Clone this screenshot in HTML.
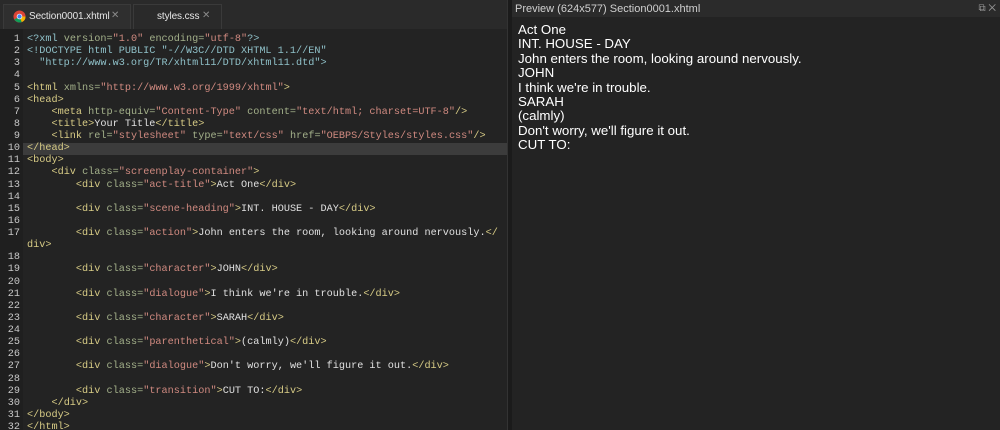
<!DOCTYPE html>
<html><head><meta charset="utf-8"><style>
*{margin:0;padding:0;box-sizing:border-box}
html,body{width:1000px;height:430px;overflow:hidden}
body{background:#232323;position:relative;font-family:"Liberation Sans",sans-serif}
.tabs{position:absolute;left:0;top:0;width:507px;height:29px;background:#2a2a2a}
.tab{position:absolute;top:4px;height:25px;background:#2f2f2f;border:1px solid #3a3a3a;border-bottom:none;color:#e6e6e6;font-size:10px;line-height:24px;white-space:nowrap;letter-spacing:-0.1px}
.x{position:absolute;color:#8a8a8a;font-size:10px;top:10px;line-height:12px;z-index:5}
.gut{position:absolute;left:0;top:29px;width:23px;height:401px;background:#1f1f1f}
.code{position:absolute;left:0;top:34px;width:507px;font-family:"Liberation Mono",monospace;font-size:10.2px;line-height:12.13px;color:#e0e0e0}
.r{position:relative;height:12.13px}
.n{position:absolute;left:0;width:20px;text-align:right;color:#c8c8c8}
.t{position:absolute;left:27px;white-space:pre}
.hl{background:#3c3c3c;left:23px;right:0;position:absolute;top:0;bottom:0}
.g{color:#d8cc86}.a{color:#a3b08a}.v{color:#d08a80}.d{color:#8fc0c8}
.split{position:absolute;left:507px;top:0;width:5px;height:430px;background:#1b1b1b;border-left:1px solid #333}
.ph{position:absolute;left:512px;top:0;width:488px;height:17px;background:#2b2b2b;color:#d0d0d0;font-size:11px;line-height:18px;padding-left:3px}
.pb{position:absolute;left:512px;top:17px;width:488px;height:413px;background:#232323;color:#fff;font-size:13.3px;line-height:14.4px;padding:6px 0 0 6px}
</style></head><body>
<div class="tabs">
<div class="tab" style="left:3px;width:128px;padding-left:25px"><svg style="position:absolute;left:9px;top:5px" width="13" height="13" viewBox="0 0 14 14"><circle cx="7" cy="7" r="6.5" fill="#db4437"/><path d="M7 7 L1.4 10.2 A6.5 6.5 0 0 0 9.5 13 Z" fill="#0f9d58"/><path d="M7 7 L9.5 13 A6.5 6.5 0 0 0 13.5 7 Z" fill="#f4b400"/><circle cx="7" cy="7" r="3" fill="#fff"/><circle cx="7" cy="7" r="2.3" fill="#4285f4"/></svg>Section0001.xhtml</div>
<div class="tab" style="left:133px;width:89px;padding-left:23px;background:#2a2a2a">styles.css</div>
<span class="x" style="left:111px">✕</span>
<span class="x" style="left:202px">✕</span>
</div>
<div class="gut"></div>
<div class="code">
<div class="r"><span class="n">1</span><span class="t"><span class="d">&lt;?xml</span> <span class="a">version=</span><span class="v">"1.0"</span> <span class="a">encoding=</span><span class="v">"utf-8"</span><span class="d">?&gt;</span></span></div>
<div class="r"><span class="n">2</span><span class="t"><span class="d">&lt;!DOCTYPE html PUBLIC "-//W3C//DTD XHTML 1.1//EN"</span></span></div>
<div class="r"><span class="n">3</span><span class="t"><span class="d">  "http://www.w3.org/TR/xhtml11/DTD/xhtml11.dtd"&gt;</span></span></div>
<div class="r"><span class="n">4</span></div>
<div class="r"><span class="n">5</span><span class="t"><span class="g">&lt;html</span> <span class="a">xmlns=</span><span class="v">"http://www.w3.org/1999/xhtml"</span><span class="g">&gt;</span></span></div>
<div class="r"><span class="n">6</span><span class="t"><span class="g">&lt;head&gt;</span></span></div>
<div class="r"><span class="n">7</span><span class="t">    <span class="g">&lt;meta</span> <span class="a">http-equiv=</span><span class="v">"Content-Type"</span> <span class="a">content=</span><span class="v">"text/html; charset=UTF-8"</span><span class="g">/&gt;</span></span></div>
<div class="r"><span class="n">8</span><span class="t">    <span class="g">&lt;title&gt;</span>Your Title<span class="g">&lt;/title&gt;</span></span></div>
<div class="r"><span class="n">9</span><span class="t">    <span class="g">&lt;link</span> <span class="a">rel=</span><span class="v">"stylesheet"</span> <span class="a">type=</span><span class="v">"text/css"</span> <span class="a">href=</span><span class="v">"OEBPS/Styles/styles.css"</span><span class="g">/&gt;</span></span></div>
<div class="r"><span class="hl"></span><span class="n">10</span><span class="t"><span class="g">&lt;/head&gt;</span></span></div>
<div class="r"><span class="n">11</span><span class="t"><span class="g">&lt;body&gt;</span></span></div>
<div class="r"><span class="n">12</span><span class="t">    <span class="g">&lt;div</span> <span class="a">class=</span><span class="v">"screenplay-container"</span><span class="g">&gt;</span></span></div>
<div class="r"><span class="n">13</span><span class="t">        <span class="g">&lt;div</span> <span class="a">class=</span><span class="v">"act-title"</span><span class="g">&gt;</span>Act One<span class="g">&lt;/div&gt;</span></span></div>
<div class="r"><span class="n">14</span></div>
<div class="r"><span class="n">15</span><span class="t">        <span class="g">&lt;div</span> <span class="a">class=</span><span class="v">"scene-heading"</span><span class="g">&gt;</span>INT. HOUSE - DAY<span class="g">&lt;/div&gt;</span></span></div>
<div class="r"><span class="n">16</span></div>
<div class="r"><span class="n">17</span><span class="t">        <span class="g">&lt;div</span> <span class="a">class=</span><span class="v">"action"</span><span class="g">&gt;</span>John enters the room, looking around nervously.<span class="g">&lt;/</span></span></div>
<div class="r"><span class="t"><span class="g">div&gt;</span></span></div>
<div class="r"><span class="n">18</span></div>
<div class="r"><span class="n">19</span><span class="t">        <span class="g">&lt;div</span> <span class="a">class=</span><span class="v">"character"</span><span class="g">&gt;</span>JOHN<span class="g">&lt;/div&gt;</span></span></div>
<div class="r"><span class="n">20</span></div>
<div class="r"><span class="n">21</span><span class="t">        <span class="g">&lt;div</span> <span class="a">class=</span><span class="v">"dialogue"</span><span class="g">&gt;</span>I think we're in trouble.<span class="g">&lt;/div&gt;</span></span></div>
<div class="r"><span class="n">22</span></div>
<div class="r"><span class="n">23</span><span class="t">        <span class="g">&lt;div</span> <span class="a">class=</span><span class="v">"character"</span><span class="g">&gt;</span>SARAH<span class="g">&lt;/div&gt;</span></span></div>
<div class="r"><span class="n">24</span></div>
<div class="r"><span class="n">25</span><span class="t">        <span class="g">&lt;div</span> <span class="a">class=</span><span class="v">"parenthetical"</span><span class="g">&gt;</span>(calmly)<span class="g">&lt;/div&gt;</span></span></div>
<div class="r"><span class="n">26</span></div>
<div class="r"><span class="n">27</span><span class="t">        <span class="g">&lt;div</span> <span class="a">class=</span><span class="v">"dialogue"</span><span class="g">&gt;</span>Don't worry, we'll figure it out.<span class="g">&lt;/div&gt;</span></span></div>
<div class="r"><span class="n">28</span></div>
<div class="r"><span class="n">29</span><span class="t">        <span class="g">&lt;div</span> <span class="a">class=</span><span class="v">"transition"</span><span class="g">&gt;</span>CUT TO:<span class="g">&lt;/div&gt;</span></span></div>
<div class="r"><span class="n">30</span><span class="t">    <span class="g">&lt;/div&gt;</span></span></div>
<div class="r"><span class="n">31</span><span class="t"><span class="g">&lt;/body&gt;</span></span></div>
<div class="r"><span class="n">32</span><span class="t"><span class="g">&lt;/html&gt;</span></span></div>
</div>
<div class="split"></div>
<div class="ph">Preview (624x577) Section0001.xhtml<span style="position:absolute;right:4px;color:#999;font-size:10px">⧉ ✕</span></div>
<div class="pb">
<div>Act One</div><div>INT. HOUSE - DAY</div><div>John enters the room, looking around nervously.</div><div>JOHN</div><div>I think we're in trouble.</div><div>SARAH</div><div>(calmly)</div><div>Don't worry, we'll figure it out.</div><div>CUT TO:</div>
</div>
</body></html>
